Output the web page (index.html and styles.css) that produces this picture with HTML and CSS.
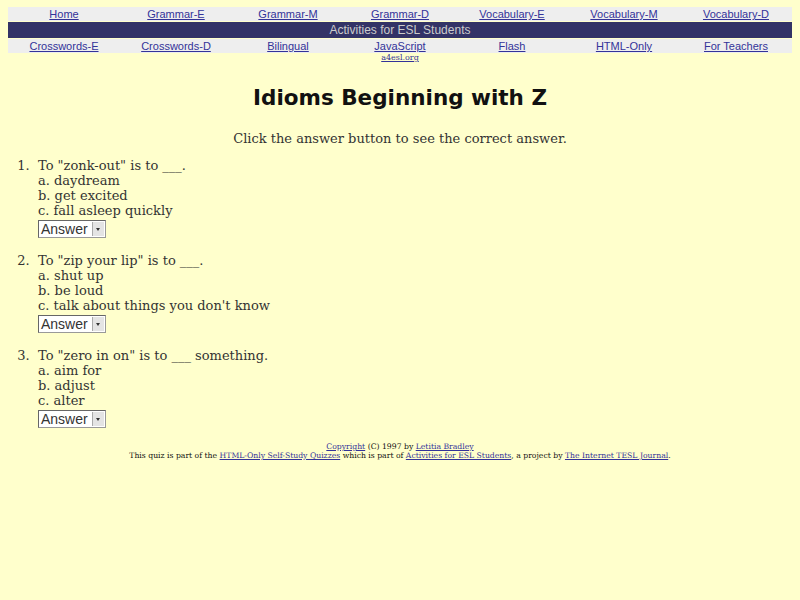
FILE: index.html
```html
<!DOCTYPE html>
<html>
<head>
<meta charset="utf-8">
<title>Idioms Beginning with Z</title>
<link rel="stylesheet" href="styles.css">
</head>
<body>
<div class="nav">
  <div class="navrow">
    <a href="#">Home</a><a href="#">Grammar-E</a><a href="#">Grammar-M</a><a href="#">Grammar-D</a><a href="#">Vocabulary-E</a><a href="#">Vocabulary-M</a><a href="#">Vocabulary-D</a>
  </div>
  <div class="bar">Activities for ESL Students</div>
  <div class="navrow">
    <a href="#">Crosswords-E</a><a href="#">Crosswords-D</a><a href="#">Bilingual</a><a href="#">JavaScript</a><a href="#">Flash</a><a href="#">HTML-Only</a><a href="#">For Teachers</a>
  </div>
  <div class="site"><a href="#">a4esl.org</a></div>
</div>
<h1>Idioms Beginning with Z</h1>
<p class="intro">Click the answer button to see the correct answer.</p>
<ol class="quiz">
  <li>
    <div>To "zonk-out" is to ___.</div>
    <div class="opt">a. daydream</div>
    <div class="opt">b. get excited</div>
    <div class="opt">c. fall asleep quickly</div>
    <div class="sel">Answer<span class="arrow"></span></div>
  </li>
  <li>
    <div>To "zip your lip" is to ___.</div>
    <div class="opt">a. shut up</div>
    <div class="opt">b. be loud</div>
    <div class="opt">c. talk about things you don't know</div>
    <div class="sel">Answer<span class="arrow"></span></div>
  </li>
  <li>
    <div>To "zero in on" is to ___ something.</div>
    <div class="opt">a. aim for</div>
    <div class="opt">b. adjust</div>
    <div class="opt">c. alter</div>
    <div class="sel">Answer<span class="arrow"></span></div>
  </li>
</ol>
<div class="footer">
  <div><a href="#">Copyright</a> (C) 1997 by <a href="#">Letitia Bradley</a></div>
  <div>This quiz is part of the <a href="#">HTML-Only Self-Study Quizzes</a> which is part of <a href="#">Activities for ESL Students</a>, a project by <a href="#">The Internet TESL Journal</a>.</div>
</div>
</body>
</html>
```
FILE: styles.css
```css
html, body {
  background: #ffffcc;
}
body {
  margin: 7px 8px 8px 8px;
  font-family: "DejaVu Serif", serif;
  color: #333333;
}
.nav {
  font-family: "Liberation Sans", Arial, sans-serif;
}
.navrow {
  display: grid;
  grid-template-columns: repeat(7, 1fr);
  background: #eeeeee;
  height: 14px;
  align-items: center;
  font-size: 11px;
  text-align: center;
}
.navrow a {
  color: #333399;
}
.bar {
  background: #333366;
  color: #cccccc;
  font-size: 12px;
  text-align: center;
  height: 16px;
  line-height: 16px;
  margin: 1px 0;
}
.site {
  text-align: center;
  font-size: 8px;
  line-height: 10px;
  font-family: "DejaVu Serif", serif;
}
.site a {
  color: #333399;
}
h1 {
  font-family: "DejaVu Sans", sans-serif;
  font-weight: bold;
  font-size: 21.5px;
  color: #111111;
  text-align: center;
  margin: 20px 0 0 0;
  line-height: 30px;
}
.intro {
  text-align: center;
  font-size: 13px;
  margin: 17px 0 0 0;
  line-height: 18px;
}
.quiz {
  font-size: 13px;
  line-height: 15px;
  margin: 10px 0 0 0;
  padding-left: 30px;
}
.quiz li {
  margin-bottom: 15px;
}
.quiz li::marker {
  content: counter(list-item) ".\00a0\00a0";
}
.sel {
  display: inline-flex;
  align-items: center;
  margin-top: 2px;
  height: 18px;
  width: 68px;
  box-sizing: border-box;
  border: 1px solid #999999;
  border-top-color: #666666;
  border-left-color: #666666;
  background: #ffffff;
  font-family: "Liberation Sans", Arial, sans-serif;
  font-size: 14px;
  color: #333333;
  padding-left: 2px;
  position: relative;
}
.arrow {
  position: absolute;
  right: 1px;
  top: 1px;
  width: 11px;
  height: 14px;
  background: #e4e4e4;
  border-left: 1px solid #aaaaaa;
}
.arrow::after {
  content: "";
  position: absolute;
  left: 3px;
  top: 6px;
  border-left: 2px solid transparent;
  border-right: 2px solid transparent;
  border-top: 3px solid #333333;
}
.footer {
  text-align: center;
  font-size: 7.7px;
  line-height: 9px;
  color: #111111;
  margin-top: -1px;
}
.footer a {
  color: #333399;
}
```
